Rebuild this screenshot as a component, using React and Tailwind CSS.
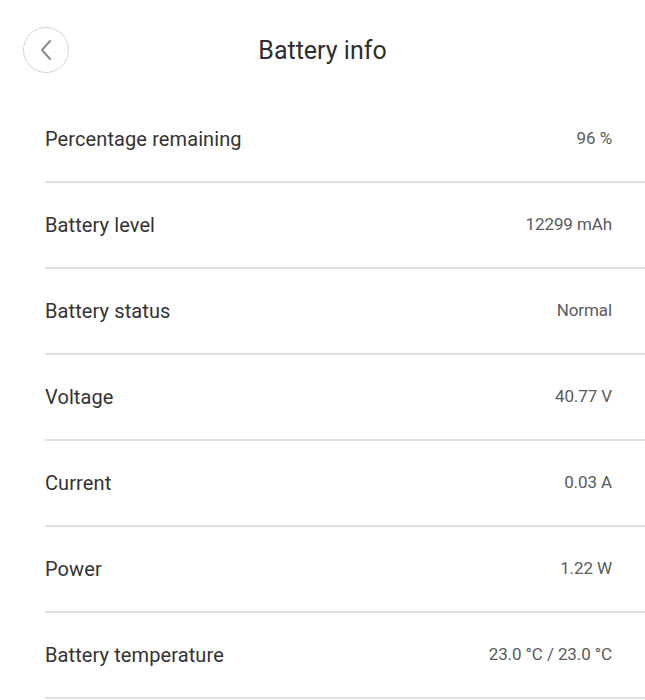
import React from 'react';

const rows = [
  { label: 'Percentage remaining', value: '96 %' },
  { label: 'Battery level', value: '12299 mAh' },
  { label: 'Battery status', value: 'Normal' },
  { label: 'Voltage', value: '40.77 V' },
  { label: 'Current', value: '0.03 A' },
  { label: 'Power', value: '1.22 W' },
  { label: 'Battery temperature', value: '23.0 °C / 23.0 °C' },
];

const App = () => {
  return (
    <div className="min-h-screen bg-white font-['Roboto','Liberation_Sans',sans-serif]">
      {/* header */}
      <div className="relative h-[97px] flex items-start justify-center">
        <button
          type="button"
          className="absolute left-[23px] top-[27px] w-[46px] h-[46px] rounded-full border border-[#d4d4d4] flex items-center justify-center"
          aria-label="Back"
        >
          <svg width="14" height="22" viewBox="0 0 14 22" fill="none">
            <path d="M11 2 L3 11 L11 20" stroke="#8a8a8a" strokeWidth="2" strokeLinecap="round" strokeLinejoin="round" />
          </svg>
        </button>
        <h1 className="mt-[35px] text-[25px] leading-[32px] text-[#2e2e2e]">Battery info</h1>
      </div>

      {/* rows */}
      <div className="pl-[45px]">
        {rows.map((r) => (
          <div key={r.label} className="h-[86px] flex items-center justify-between border-b-2 border-[#dedede] pr-[33px]">
            <span className="text-[20px] text-[#333333] tracking-[0.1px]">{r.label}</span>
            <span className="text-[17px] text-[#5a5a5a] tracking-[-0.1px]">{r.value}</span>
          </div>
        ))}
      </div>
    </div>
  );
};

export default App;
